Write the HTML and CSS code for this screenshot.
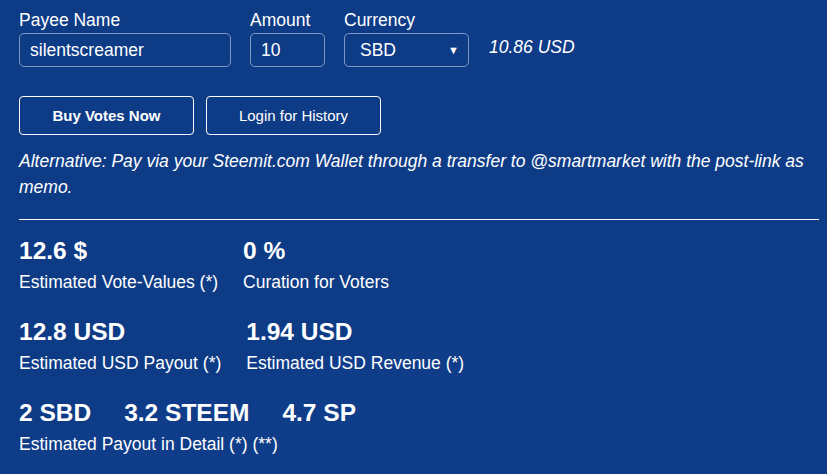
FILE: index.html
```html
<!DOCTYPE html>
<html lang="en">
<head>
  <meta charset="UTF-8">
  <title>Buy Votes</title>
  <link rel="stylesheet" href="styles.css">
</head>
<body>
  <div class="page">
    <div class="form-row">
      <div class="field">
        <label for="payee">Payee Name</label>
        <input id="payee" class="inp payee" type="text" value="silentscreamer">
      </div>
      <div class="field">
        <label for="amount">Amount</label>
        <input id="amount" class="inp amount" type="text" value="10">
      </div>
      <div class="field">
        <label for="currency">Currency</label>
        <div class="select-wrap">
          <select id="currency" class="inp currency">
            <option>SBD</option>
            <option>STEEM</option>
          </select>
          <span class="arrow">&#9660;</span>
        </div>
      </div>
      <div class="usd">10.86 USD</div>
    </div>

    <div class="btn-row">
      <button class="btn btn-buy">Buy Votes Now</button>
      <button class="btn">Login for History</button>
    </div>

    <p class="alt">Alternative: Pay via your Steemit.com Wallet through a transfer to @smartmarket with the post-link as memo.</p>

    <div class="line"></div>

    <div class="stats">
      <div class="stat">
        <div class="val">12.6 $</div>
        <div class="lbl">Estimated Vote-Values (*)</div>
      </div>
      <div class="stat">
        <div class="val">0 %</div>
        <div class="lbl">Curation for Voters</div>
      </div>
    </div>

    <div class="stats">
      <div class="stat">
        <div class="val">12.8 USD</div>
        <div class="lbl">Estimated USD Payout (*)</div>
      </div>
      <div class="stat">
        <div class="val">1.94 USD</div>
        <div class="lbl">Estimated USD Revenue (*)</div>
      </div>
    </div>

    <div class="stats">
      <div class="stat">
        <div class="val vals"><span>2 SBD</span><span>3.2 STEEM</span><span>4.7 SP</span></div>
        <div class="lbl">Estimated Payout in Detail (*) (**)</div>
      </div>
    </div>
  </div>
</body>
</html>
```

FILE: styles.css
```css
html, body {
  height: 100%;
}
body {
  margin: 0;
  font-family: "Liberation Sans", Arial, sans-serif;
  font-size: 17.5px;
  color: #fff;
  background-color: #0e3b86;
  background-image:
    linear-gradient(165deg, transparent 64%, rgba(30, 80, 180, 0.08) 64%),
    linear-gradient(200deg, rgba(30, 80, 180, 0.05) 22%, transparent 22%);
  overflow: hidden;
}
.page {
  padding: 10px 8px 0 19px;
}
.form-row {
  display: flex;
  align-items: flex-end;
}
.field {
  margin-right: 19px;
}
.field label {
  display: block;
  line-height: 20px;
  margin-bottom: 3px;
}
.inp {
  box-sizing: border-box;
  height: 34px;
  background: transparent;
  color: #fff;
  border: 1px solid rgba(200, 212, 240, 0.6);
  border-radius: 5px;
  font-family: "Liberation Sans", Arial, sans-serif;
  font-size: 17.5px;
  padding: 0 10px;
  outline: none;
}
.payee {
  width: 212px;
}
.amount {
  width: 75px;
}
.select-wrap {
  position: relative;
}
.currency {
  width: 125px;
  padding-left: 15px;
  -webkit-appearance: none;
  appearance: none;
}
.currency option {
  color: #000;
}
.arrow {
  position: absolute;
  right: 10px;
  top: 12px;
  font-size: 11px;
  line-height: 11px;
  pointer-events: none;
}
.usd {
  font-style: italic;
  line-height: 20px;
  margin: 0 0 10px 1px;
}
.btn-row {
  display: flex;
  gap: 12px;
  margin-top: 29px;
}
.btn {
  width: 175px;
  height: 39px;
  background: transparent;
  color: #fff;
  border: 1px solid #fff;
  border-radius: 4px;
  font-family: "Liberation Sans", Arial, sans-serif;
  font-size: 15px;
  cursor: pointer;
}
.btn-buy {
  font-weight: bold;
}
.alt {
  font-style: italic;
  line-height: 26px;
  margin: 13px 0 0 0;
}
.line {
  border-top: 1px solid #fff;
  margin: 19px 0 17px 0;
}
.stats {
  display: flex;
  gap: 25px;
  margin-bottom: 24px;
}
.val {
  font-size: 24.5px;
  font-weight: bold;
  line-height: 28px;
  margin-bottom: 6px;
}
.vals span {
  margin-right: 33px;
}
.lbl {
  line-height: 23px;
}
```
